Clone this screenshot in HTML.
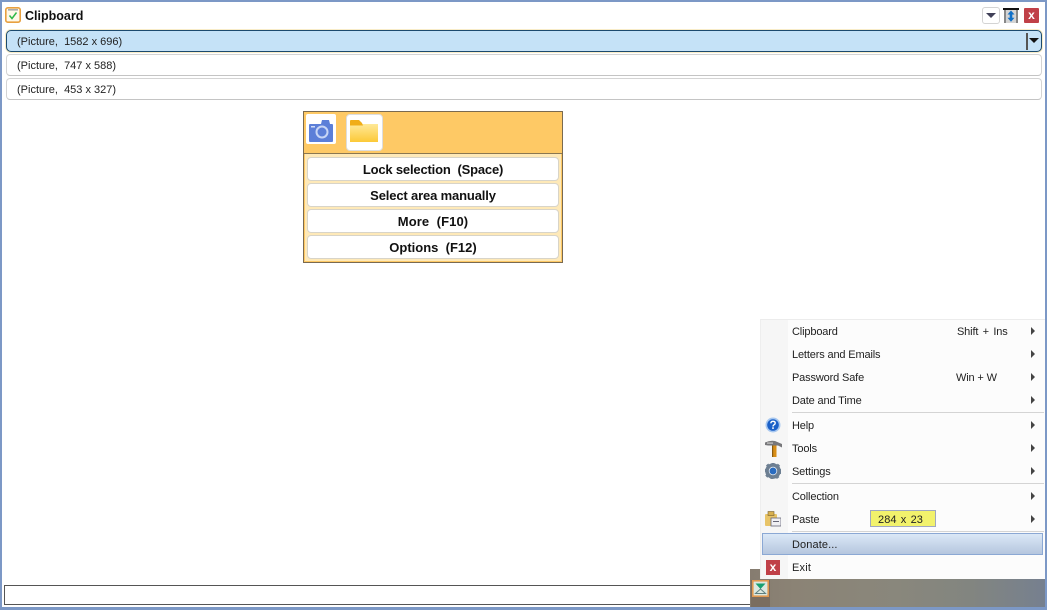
<!DOCTYPE html>
<html><head><meta charset="utf-8"><style>
html,body{margin:0;padding:0;width:1047px;height:610px;overflow:hidden;background:#fff}
body{position:relative;font-family:"Liberation Sans",sans-serif;color:#111}
.a{position:absolute;box-sizing:border-box}
.t{position:absolute;white-space:pre;font-size:11px;line-height:14px;color:#222}
.row{position:absolute;left:6px;width:1036px;height:22px;border:1px solid #d4d4d4;border-bottom-color:#c4c4c4;border-radius:4px;background:#fff;box-sizing:border-box}
.btn{position:absolute;left:307px;width:252px;height:24px;box-sizing:border-box;border:1px solid #d8d4c8;border-radius:4px;background:#fff;font-weight:bold;font-size:13px;line-height:24px;text-align:center;color:#111;white-space:pre}
.m{position:absolute;left:792px;font-size:11px;letter-spacing:-.15px;line-height:14px;color:#222;white-space:pre;margin-top:1px}
.arr{position:absolute;left:1031px;width:0;height:0;border-left:4px solid #444;border-top:4px solid transparent;border-bottom:4px solid transparent}
.sep{position:absolute;left:792px;width:252px;height:1px;background:#d4d4d4}
</style></head><body>
<div class="a" style="left:0;top:0;width:1047px;height:610px;border:2px solid #7c98c6;border-bottom-width:3px"></div>

<svg class="a" style="left:5px;top:7px" width="16" height="16" viewBox="0 0 16 16"><rect x=".8" y=".8" width="14.4" height="14.4" rx="2" fill="#fff8e8" stroke="#e8a040" stroke-width="1.6"/><rect x="3" y="2" width="10" height="1.600" fill="#aaa"/><path d="M4.500 8.500l2.500 3L11.500 5.500" fill="none" stroke="#30b848" stroke-width="1.500"/></svg>
<div class="t" style="left:25px;top:9px;font-size:12.5px;font-weight:bold;color:#111">Clipboard</div>

<div class="a" style="left:982px;top:7px;width:18px;height:17px;border:1px solid #d4d4d4;border-radius:3px;background:#fff"></div>
<div class="a" style="left:986px;top:13px;width:0;height:0;border-left:5px solid transparent;border-right:5px solid transparent;border-top:5px solid #404058"></div>
<svg class="a" style="left:1003px;top:8px" width="16" height="16" viewBox="0 0 16 16"><rect x="1" y="1" width="14" height="14" fill="#d4d4d4"/><rect x="0" y="0" width="16" height="2" fill="#111"/><rect x="1" y="2" width="2" height="13" fill="#888"/><rect x="13" y="2" width="2" height="13" fill="#888"/><path d="M8 2.500l3.500 4H9.300v3.200h2.200L8 13.700l-3.500-4h2.200V6.500H4.500z" fill="#1070c8"/></svg>
<div class="a" style="left:1024px;top:8px;width:15px;height:15px;background:#c04048;border-radius:1px;color:#fff;font-size:12px;font-weight:bold;line-height:15px;text-align:center">x</div>

<div class="row" style="top:30px;background:#c5e2f7;border-color:#1c4a6e;border-radius:5px;box-shadow:0 0 0 1px #f8ecc8"></div>
<div class="a" style="left:1026px;top:33px;width:2px;height:17px;background:#555"></div>
<div class="a" style="left:1029px;top:38px;width:0;height:0;border-left:5px solid transparent;border-right:5px solid transparent;border-top:5px solid #111"></div>
<div class="t" style="left:17px;top:35px">(Picture,  1582 x 696)</div>
<div class="row" style="top:54px"></div>
<div class="t" style="left:17px;top:59px">(Picture,  747 x 588)</div>
<div class="row" style="top:78px"></div>
<div class="t" style="left:17px;top:83px">(Picture,  453 x 327)</div>

<div class="a" style="left:303px;top:111px;width:260px;height:152px;background:#fec965;border:1px solid #7a6a50"></div>
<div class="a" style="left:304px;top:153px;width:258px;height:1px;background:#8a7750"></div>
<div class="a" style="left:305px;top:154px;width:256px;height:107px;background:#fee9b8"></div>
<div class="a" style="left:306px;top:114px;width:30px;height:30px;background:#fff;border-radius:2px"></div>
<svg class="a" style="left:308px;top:120px" width="26" height="22" viewBox="0 0 26 22"><path d="M2 4h11l1-4h7l1 4h2q1 0 1 1v16q0 1-1 1H2q-1 0-1-1V5q0-1 1-1z" fill="#5c7fd8"/><circle cx="14" cy="12" r="5.500" fill="none" stroke="#c8d6f6" stroke-width="2"/><rect x="3" y="6" width="4" height="1.500" fill="#d0dcf8"/></svg>
<div class="a" style="left:346px;top:114px;width:37px;height:37px;background:#fff;border:1px solid #ddd;border-radius:4px"></div>
<svg class="a" style="left:350px;top:120px" width="29" height="23" viewBox="0 0 29 23"><defs><linearGradient id="f" x1="0" y1="0" x2="0" y2="1"><stop offset="0" stop-color="#ffeea8"/><stop offset="1" stop-color="#fcc938"/></linearGradient></defs><path d="M0 1h9l3 3h16v18H0z" fill="url(#f)"/><path d="M0 1q0-1 1-1h8l3 3 1 2.500H0z" fill="#f0ad18"/></svg>

<div class="btn" style="top:157px;letter-spacing:-.18px">Lock selection  (Space)</div>
<div class="btn" style="top:183px;letter-spacing:-.15px">Select area manually</div>
<div class="btn" style="top:209px;letter-spacing:.1px">More  (F10)</div>
<div class="btn" style="top:235px">Options  (F12)</div>

<div class="a" style="left:4px;top:585px;width:750px;height:20px;border:1px solid #555;background:#fff"></div>

<div class="a" style="left:750px;top:569px;width:295px;height:38px;background:linear-gradient(90deg,#867c70 0,#8b8375 15%,#89877c 50%,#828580 75%,#76808f 100%)"></div>
<div class="a" style="left:751px;top:580px;width:19px;height:27px;background:#7a6d60"></div>
<div class="a" style="left:760px;top:319px;width:285px;height:260px;background:#fcfcfc;border-top:1px solid #ececec;border-left:1px solid #eee"></div>
<div class="a" style="left:761px;top:320px;width:27px;height:259px;background:#f6f6f6"></div>

<div class="m" style="top:324px">Clipboard</div><div class="m" style="left:957px;top:324px;word-spacing:1.500px">Shift + Ins</div><div class="arr" style="top:327px"></div>
<div class="m" style="top:347px">Letters and Emails</div><div class="arr" style="top:350px"></div>
<div class="m" style="top:370px">Password Safe</div><div class="m" style="left:956px;top:370px">Win + W</div><div class="arr" style="top:373px"></div>
<div class="m" style="top:393px">Date and Time</div><div class="arr" style="top:396px"></div>
<div class="sep" style="top:412px"></div>
<div class="m" style="top:418px">Help</div><div class="arr" style="top:421px"></div>
<div class="m" style="top:441px">Tools</div><div class="arr" style="top:444px"></div>
<div class="m" style="top:464px">Settings</div><div class="arr" style="top:467px"></div>
<div class="sep" style="top:483px"></div>
<div class="m" style="top:489px">Collection</div><div class="arr" style="top:492px"></div>
<div class="m" style="top:512px">Paste</div><div class="arr" style="top:515px"></div>
<div class="a" style="left:870px;top:510px;width:66px;height:17px;background:#f2f26c;border:1px solid #a0a8c0"></div>
<div class="m" style="left:878px;top:512px;letter-spacing:.1px;word-spacing:1px">284 x 23</div>
<div class="sep" style="top:531px"></div>
<div class="a" style="left:762px;top:533px;width:281px;height:22px;background:linear-gradient(#dbe8f7,#b5c6de);border:1px solid #8ba8d4"></div>
<div class="m" style="top:537px;letter-spacing:.1px">Donate...</div>
<div class="m" style="top:560px;letter-spacing:.2px">Exit</div>

<svg class="a" style="left:765px;top:417px" width="16" height="16" viewBox="0 0 16 16"><circle cx="8" cy="8" r="7.500" fill="#a8c8f0"/><circle cx="8" cy="8" r="5.800" fill="#1a60c8"/><path d="M5.800 6.300Q6 4.300 8 4.300q2.200 0 2.200 1.800 0 1-1.200 1.700Q8 8.400 8 9.500" fill="none" stroke="#fff" stroke-width="1.400"/><rect x="7.200" y="10.300" width="1.600" height="1.600" fill="#fff"/></svg>
<svg class="a" style="left:765px;top:440px" width="18" height="18" viewBox="0 0 18 18"><path d="M0 2.500Q5 0 10 1l7 3v3.500L13 5.500H3L0 5z" fill="#77777a"/><rect x="2" y="2.500" width="6" height="1.200" fill="#c8c8c8"/><rect x="7" y="5.500" width="4.500" height="11.500" fill="#d88e18"/><rect x="7" y="5.500" width="1.200" height="11.500" fill="#8a5a10"/></svg>
<svg class="a" style="left:765px;top:463px" width="16" height="16" viewBox="0 0 16 16"><circle cx="8" cy="8" r="6" fill="none" stroke="#6d7f92" stroke-width="3.600"/><circle cx="8" cy="8" r="8" fill="none" stroke="#6d7f92" stroke-width="1.600" stroke-dasharray="3 3"/><circle cx="8" cy="8" r="3.500" fill="#2a6cc0"/></svg>
<svg class="a" style="left:765px;top:511px" width="16" height="16" viewBox="0 0 16 16"><rect x="0" y="3" width="12" height="12" rx="1" fill="#e8c468"/><rect x="3" y="0.500" width="6" height="4" fill="#d8b050" stroke="#776030" stroke-width=".6"/><rect x="6" y="7" width="10" height="8" fill="#f0f0f4" stroke="#667" stroke-width=".8"/><rect x="8" y="10" width="6" height="1" fill="#667"/></svg>
<div class="a" style="left:766px;top:560px;width:14px;height:15px;background:#c04048;color:#fff;font-size:12px;font-weight:bold;line-height:14px;text-align:center">x</div>
<svg class="a" style="left:752px;top:580px" width="17" height="17" viewBox="0 0 17 17"><rect x=".8" y=".8" width="15.400" height="15.400" fill="#dce8e0" stroke="#e09850" stroke-width="1.600"/><path d="M3.500 3.500h10L8.500 9z" fill="#18a070"/><path d="M3.500 13.500L8.500 9l5 4.500z" fill="none" stroke="#608080"/></svg>
</body></html>
